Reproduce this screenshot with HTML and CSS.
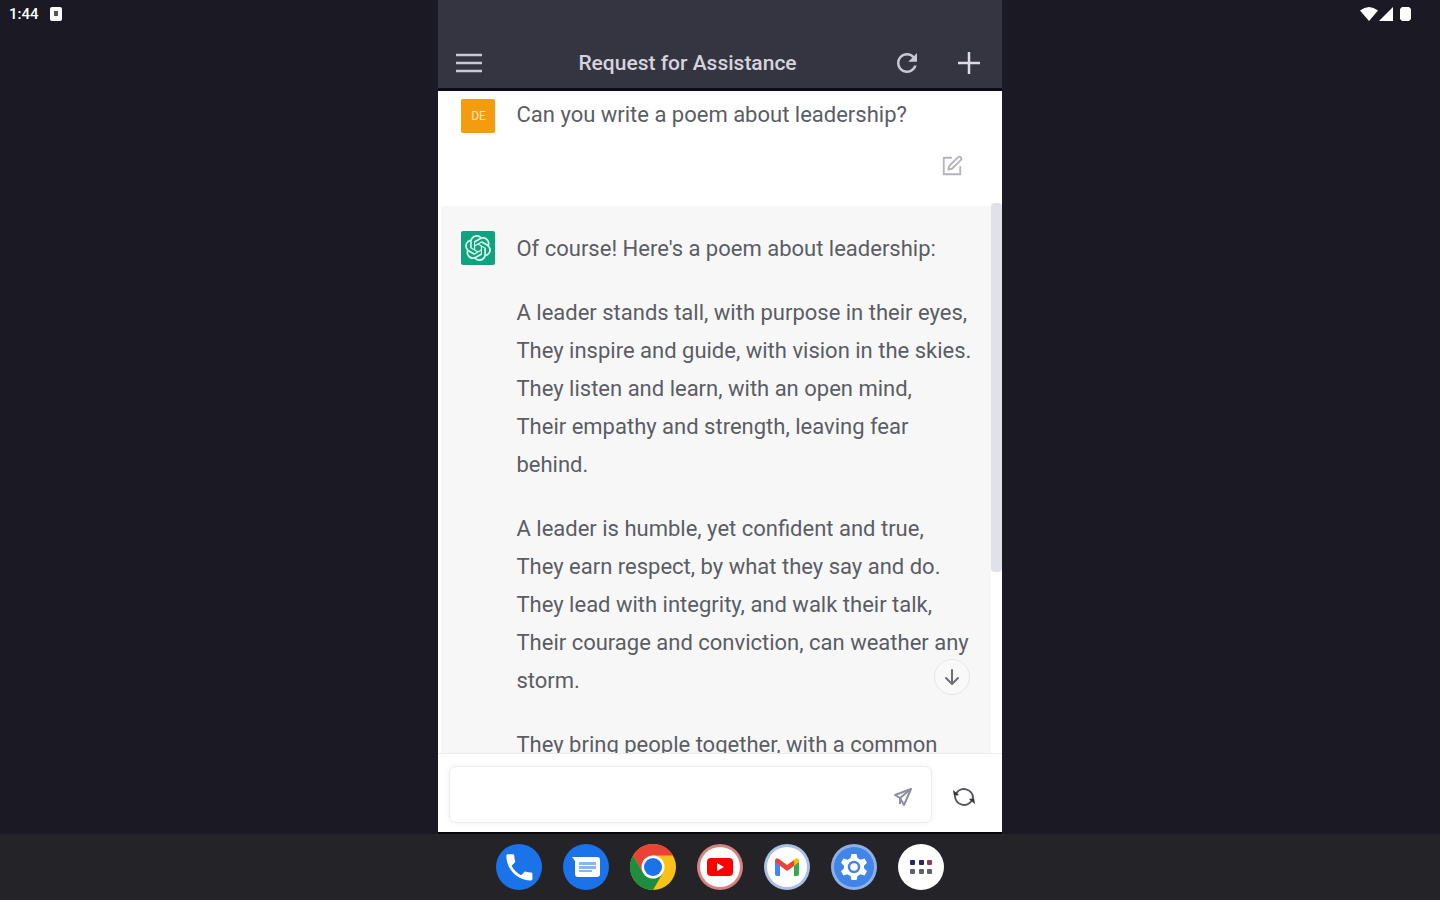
FILE: index.html
```html
<!DOCTYPE html>
<html lang="en">
<head>
    <meta charset="UTF-8">
    <meta name="viewport" content="width=device-width, initial-scale=1.0">
    <title>Request for Assistance</title>
    <link rel="stylesheet" href="styles.css">
</head>
<body>
    <div class="screen">
        <div class="status status-left">
            <span>1:44</span>
            <svg width="14" height="14" viewBox="0 0 14 14"><rect x="1" y="0" width="12" height="14" rx="2" fill="#fff"/><rect x="5" y="4" width="4" height="5" fill="#55555c"/></svg>
        </div>

        <div class="app">
            <header class="app-header">
                <button class="icon-btn" aria-label="Menu">
                    <svg width="28" height="24" viewBox="0 0 28 24" stroke="#c9c8d3" stroke-width="2.500"><path d="M1 4h26M1 12h26M1 20h26"/></svg>
                </button>
                <h1>Request for Assistance</h1>
                <button class="icon-btn" aria-label="Reload">
                    <svg width="30" height="30" viewBox="0 0 24 24" fill="#c9c8d3"><path d="M17.65 6.35C16.2 4.9 14.21 4 12 4c-4.42 0-7.99 3.58-7.99 8s3.57 8 7.99 8c3.73 0 6.84-2.55 7.73-6h-2.08c-.82 2.33-3.04 4-5.65 4-3.31 0-6-2.69-6-6s2.69-6 6-6c1.66 0 3.14.69 4.22 1.78L13 11h7V4l-2.35 2.35z"/></svg>
                </button>
                <button class="icon-btn" aria-label="New chat">
                    <svg width="22" height="22" viewBox="0 0 22 22" stroke="#dddce6" stroke-width="2.500"><path d="M11 0v22M0 11h22"/></svg>
                </button>
            </header>

            <main class="chat">
                <div class="messages">
                    <article class="message user">
                        <div class="avatar avatar-user">DE</div>
                        <div class="text">
                            <p>Can you write a poem about leadership?</p>
                            <button class="icon-btn edit" aria-label="Edit">
                                <svg width="22" height="22" viewBox="0 0 24 24" fill="none" stroke="#b3b4be" stroke-width="2" stroke-linecap="round" stroke-linejoin="round"><path d="M11 3H3v18h18v-8"/><path d="M18.5 2.5a2.1 2.1 0 0 1 3 3L12 15l-4 1 1-4z"/></svg>
                            </button>
                        </div>
                    </article>
                    <article class="message bot">
                        <div class="avatar avatar-bot">
                            <svg width="26" height="26" viewBox="0 0 24 24" fill="#d9f3e9"><path d="M22.2819 9.8211a5.9847 5.9847 0 0 0-.5157-4.9108 6.0462 6.0462 0 0 0-6.5098-2.9A6.0651 6.0651 0 0 0 4.9807 4.1818a5.9847 5.9847 0 0 0-3.9977 2.9 6.0462 6.0462 0 0 0 .7427 7.0966 5.98 5.98 0 0 0 .511 4.9107 6.051 6.051 0 0 0 6.5146 2.9001A5.9847 5.9847 0 0 0 13.2599 24a6.0557 6.0557 0 0 0 5.7718-4.2058 5.9894 5.9894 0 0 0 3.9977-2.9001 6.0557 6.0557 0 0 0-.7475-7.0729zm-9.022 12.6081a4.4755 4.4755 0 0 1-2.8764-1.0408l.1419-.0804 4.7783-2.7582a.7948.7948 0 0 0 .3927-.6813v-6.7369l2.02 1.1686a.071.071 0 0 1 .038.052v5.5826a4.504 4.504 0 0 1-4.4945 4.4944zm-9.6607-4.1254a4.4708 4.4708 0 0 1-.5346-3.0137l.142.0852 4.783 2.7582a.7712.7712 0 0 0 .7806 0l5.8428-3.3685v2.3324a.0804.0804 0 0 1-.0332.0615L9.74 19.9502a4.4992 4.4992 0 0 1-6.1408-1.6464zM2.3408 7.8956a4.485 4.485 0 0 1 2.3655-1.9728V11.6a.7664.7664 0 0 0 .3879.6765l5.8144 3.3543-2.0201 1.1685a.0757.0757 0 0 1-.071 0l-4.8303-2.7865A4.504 4.504 0 0 1 2.3408 7.872zm16.5963 3.8558L13.1038 8.364 15.1192 7.2a.0757.0757 0 0 1 .071 0l4.8303 2.7913a4.4944 4.4944 0 0 1-.6765 8.1042v-5.6772a.79.79 0 0 0-.407-.667zm2.0107-3.0231l-.142-.0852-4.7735-2.7818a.7759.7759 0 0 0-.7854 0L9.409 9.2297V6.8974a.0662.0662 0 0 1 .0284-.0615l4.8303-2.7866a4.4992 4.4992 0 0 1 6.6802 4.66zM8.3065 12.863l-2.02-1.1638a.0804.0804 0 0 1-.038-.0567V6.0742a4.4992 4.4992 0 0 1 7.3757-3.4537l-.142.0805L8.704 5.459a.7948.7948 0 0 0-.3927.6813zm1.0976-2.3654l2.602-1.4998 2.6069 1.4998v2.9994l-2.5974 1.4997-2.6067-1.4997Z"/></svg>
                        </div>
                        <div class="text">
                            <p>Of course! Here's a poem about leadership:</p>
                            <p>A leader stands tall, with purpose in their eyes,<br>
                            They inspire and guide, with vision in the skies.<br>
                            They listen and learn, with an open mind,<br>
                            Their empathy and strength, leaving fear behind.</p>
                            <p>A leader is humble, yet confident and true,<br>
                            They earn respect, by what they say and do.<br>
                            They lead with integrity, and walk their talk,<br>
                            Their courage and conviction, can weather any storm.</p>
                            <p>They bring people together, with a common</p>
                        </div>
                    </article>
                </div>
                <div class="scroll-track"><div class="scroll-thumb"></div></div>
                <button class="scroll-down" aria-label="Scroll to bottom">
                    <svg width="18" height="18" viewBox="0 0 18 18" fill="none" stroke="#6c6d76" stroke-width="2" stroke-linecap="round" stroke-linejoin="round"><path d="M9 2v14M3 10l6 6 6-6"/></svg>
                </button>
            </main>

            <form class="composer">
                <div class="input-box">
                    <input type="text" aria-label="Message">
                    <button type="button" class="icon-btn" aria-label="Send">
                        <svg width="20" height="20" viewBox="0 0 20 20" fill="none" stroke="#8e8ea0" stroke-width="2" stroke-linejoin="round"><path d="M18 2L2 8l5 3 4 7z"/><path d="M18 2L7 11v6"/></svg>
                    </button>
                </div>
                <button type="button" class="icon-btn" aria-label="Regenerate response">
                    <svg width="24" height="22" viewBox="0 0 24 22" fill="none" stroke="#55565f" stroke-width="2"><path d="M4 8a9 9 0 0 1 17 4M20 14a9 9 0 0 1-17-4"/><path d="M1 4l1 6 5-1zM23 18l-1-6-5 1z" fill="#33343c" stroke="none"/></svg>
                </button>
            </form>
        </div>

        <div class="status status-right">
            <svg width="52" height="16" viewBox="0 0 52 16" fill="#fff"><path d="M0 4.500Q9-2.500 18 4.500L9 15z"/><path d="M19 15L33 1v14z"/><path d="M40 3l2-2h7l2 2v10l-2 2h-7l-2-2z"/></svg>
        </div>
    </div>

    <nav class="taskbar">
        <button aria-label="Phone">
            <svg viewBox="0 0 46 46"><circle cx="23" cy="23" r="23" fill="#1a73e8"/><path fill="#fff" transform="translate(6 6) scale(1.450)" d="M6.620 10.790c1.440 2.830 3.760 5.140 6.590 6.590l2.200-2.200c.27-.27.67-.36 1.020-.24 1.120.37 2.330.57 3.570.57.55 0 1 .45 1 1V20c0 .55-.45 1-1 1-9.390 0-17-7.610-17-17 0-.55.45-1 1-1h3.500c.55 0 1 .45 1 1 0 1.250.2 2.450.57 3.570.11.35.03.74-.25 1.020l-2.200 2.200z"/></svg>
        </button>
        <button aria-label="Messages">
            <svg viewBox="0 0 46 46"><circle cx="23" cy="23" r="23" fill="#1a73e8"/><path d="M9 13h25a3 3 0 0 1 3 3v14a3 3 0 0 1-3 3H15a3 3 0 0 1-3-3V17z" fill="#fff"/><path d="M16 18h17v3H16zM16 22h17v3H16zM16 26h13v2H16z" fill="#8ab4f8"/></svg>
        </button>
        <button aria-label="Chrome">
            <svg viewBox="0 0 46 46"><circle cx="23" cy="23" r="23" fill="#fbc116"/><path d="M3.080 11.500A23 23 0 0 1 42.920 11.500H23L13 28.700z" fill="#ea4335"/><path d="M3.080 11.500A23 23 0 0 0 23 46L33 28.700 13 28.700z" fill="#1e8e3e"/><circle cx="23" cy="23" r="11.500" fill="#fff"/><circle cx="23" cy="23" r="9" fill="#1a73e8"/></svg>
        </button>
        <button aria-label="YouTube">
            <svg viewBox="0 0 46 46"><circle cx="23" cy="23" r="23" fill="#d98080"/><circle cx="23" cy="23" r="20" fill="#fff"/><rect x="10" y="14" width="26" height="18" rx="4" fill="#f00"/><path d="M20 19v8l7-4z" fill="#fff"/></svg>
        </button>
        <button aria-label="Gmail">
            <svg viewBox="0 0 46 46"><circle cx="23" cy="23" r="23" fill="#a9c0e8"/><circle cx="23" cy="23" r="20" fill="#fff"/><path d="M11 17l5 4v11h-3a2 2 0 0 1-2-2z" fill="#4285f4"/><path d="M30 21l5-4v13a2 2 0 0 1-2 2h-3z" fill="#34a853"/><path d="M30 16l1-1q4-2 4 2v1l-5 4z" fill="#fbbc04"/><path d="M11 18v-1q0-4 4-2l8 6 7-5v6l-7 5z" fill="#ea4335"/></svg>
        </button>
        <button aria-label="Settings">
            <svg viewBox="0 0 46 46"><circle cx="23" cy="23" r="23" fill="#8fb0e6"/><circle cx="23" cy="23" r="20" fill="#4285e8"/><path d="M20.500 10h5l1 4 3 1.700 4-1.200 2.500 4.300-3 2.900v2.600l3 2.900-2.500 4.300-4-1.200-3 1.700-1 4h-5l-1-4-3-1.700-4 1.200-2.500-4.300 3-2.900v-2.600l-3-2.900 2.500-4.300 4 1.200 3-1.700z" fill="#fff"/><circle cx="23" cy="23" r="5" fill="#fff" stroke="#4285e8" stroke-width="2.500"/></svg>
        </button>
        <button aria-label="All apps">
            <svg viewBox="0 0 46 46"><circle cx="23" cy="23" r="23" fill="#fff"/><g fill="#23266b"><rect x="12" y="16" width="5" height="5" rx="1"/><rect x="21" y="16" width="5" height="5" rx="1"/></g><rect x="29" y="16" width="5" height="5" rx="1" fill="#8b3a62"/><g fill="#5f6368"><rect x="12" y="25" width="5" height="5" rx="1"/><rect x="21" y="25" width="5" height="5" rx="1"/><rect x="29" y="25" width="5" height="5" rx="1"/></g></svg>
        </button>
    </nav>
</body>
</html>
```
FILE: styles.css
```css
* {
    box-sizing: border-box;
}
body {
    margin: 0;
    height: 100vh;
    display: flex;
    flex-direction: column;
    background: #1b1a24;
    font-family: Roboto, "Liberation Sans", sans-serif;
    color: #5b5d64;
}
button {
    border: none;
    background: none;
    padding: 0;
    cursor: pointer;
}
svg {
    display: block;
}

/* desktop area: status icons on both sides of the app */
.screen {
    flex: 1;
    min-height: 0;
    display: grid;
    grid-template-columns: 1fr 39.1% 1fr;
    grid-template-rows: 100%;
}
.status {
    display: flex;
    align-items: center;
    height: 28px;
    color: #fff;
    font-size: 15px;
    font-weight: 500;
}
.status-left {
    padding-left: 9px;
    gap: 10px;
}
.status-right {
    justify-content: flex-end;
    padding-right: 28px;
}

.app {
    display: flex;
    flex-direction: column;
    background: #fff;
    border-bottom: 2px solid #08080b;
}
.app-header {
    display: flex;
    align-items: center;
    height: 91px;
    padding: 42px 22px 4px 17px;
    background: #353441;
    border-bottom: 3px solid #0b0a18;
}
.app-header h1 {
    flex: 1;
    margin: 0;
    text-align: center;
    font-size: 21px;
    font-weight: 500;
    color: #d5d4de;
}
.icon-btn {
    display: flex;
    align-items: center;
    justify-content: center;
}
.app-header .icon-btn + .icon-btn {
    margin-left: 36px;
}

.chat {
    position: relative;
    flex: 1;
    min-height: 0;
    display: flex;
}
.messages {
    flex: 1;
    overflow: hidden;
    padding-left: 3px;
}
.message {
    display: flex;
    gap: 21px;
    padding: 5px 14px 27px 20px;
}
.message.bot {
    padding-top: 24px;
    background: #f7f7f8;
}
.avatar {
    display: flex;
    align-items: center;
    justify-content: center;
    flex: none;
    width: 34px;
    height: 34px;
    margin-top: 2px;
    border-radius: 2px;
    font-size: 12px;
    color: #fde3b8;
}
.avatar-user {
    margin-top: 3px;
    background: #f39c0f;
}
.avatar-bot {
    margin-top: 1px;
    background: #10a37f;
}
.text {
    flex: 1;
    font-size: 22px;
    line-height: 38px;
}
.text p {
    margin: 0 0 26px;
}
.message.user p {
    margin-bottom: 18px;
}
.edit {
    height: 27px;
    margin: 0 14px 0 auto;
}

.scroll-track {
    width: 11px;
    padding-top: 112px;
}
.scroll-thumb {
    height: 67%;
    border-radius: 4px;
    background: #e1e1e9;
}
.scroll-down {
    position: absolute;
    right: 32px;
    bottom: 58px;
    display: flex;
    align-items: center;
    justify-content: center;
    width: 36px;
    height: 36px;
    border: 1px solid #e6e6ea;
    border-radius: 50%;
    background: #f9f9fa;
}

.composer {
    display: flex;
    align-items: center;
    gap: 20px;
    padding: 12px 26px 9px 11px;
    border-top: 1px solid #ececef;
}
.composer .icon-btn {
    padding-top: 4px;
}
.input-box {
    flex: 1;
    display: flex;
    align-items: center;
    height: 57px;
    padding: 0 18px 0 12px;
    border: 1px solid #ececef;
    border-radius: 7px;
    box-shadow: 0 0 6px rgba(0, 0, 0, 0.06);
}
.input-box input {
    flex: 1;
    min-width: 0;
    border: none;
    outline: none;
    background: none;
    font: inherit;
    font-size: 22px;
}

.taskbar {
    display: flex;
    align-items: center;
    justify-content: center;
    gap: 21px;
    height: 66px;
    background: #242428;
}
.taskbar button {
    width: 46px;
    height: 46px;
}
```
